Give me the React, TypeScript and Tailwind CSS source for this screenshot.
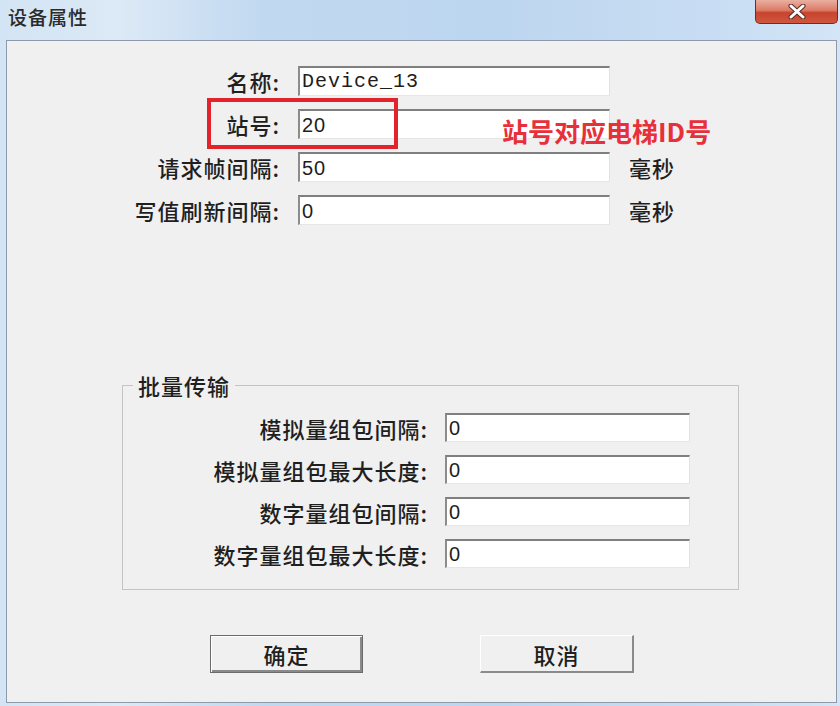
import React from "react";

const cjk = { fontFamily: '"Noto Sans CJK SC", "Noto Sans", sans-serif' };

function Field({ value, width, mono }: { value: string; width: string; mono?: boolean }) {
  return (
    <div
      className={`${width} h-full bg-white border-t-2 border-l-2 border-t-[#7f7f7f] border-l-[#8c8c8c] border-r border-b border-r-[#e2e2e2] border-b-[#e6e6e6] flex items-center pl-[2px] text-[#1d1d1d]`}
      style={{
        fontFamily: mono ? '"Liberation Mono", monospace' : '"Liberation Sans", sans-serif',
      }}
    >
      <span className="text-[20px] leading-none">{value}</span>
    </div>
  );
}

const topRows = [
  { label: "名称:", value: "Device_13", mono: true, unit: "" },
  { label: "站号:", value: "20", mono: false, unit: "" },
  { label: "请求帧间隔:", value: "50", mono: false, unit: "毫秒" },
  { label: "写值刷新间隔:", value: "0", mono: false, unit: "毫秒" },
];

const batchRows = ["模拟量组包间隔:", "模拟量组包最大长度:", "数字量组包间隔:", "数字量组包最大长度:"];

export default function App() {
  return (
    <div
      className="w-[840px] h-[706px] flex flex-col overflow-hidden bg-[linear-gradient(90deg,#d3e4f4_0%,#dce9f6_14%,#c0d8f0_32%,#bdd6ef_60%,#c8ddf3_85%,#d3e5f6_100%)] text-[#1f1f1f]"
      style={cjk}
    >
      {/* title bar */}
      <div className="h-[40px] shrink-0 flex items-start justify-between">
        <span className="pl-[8px] pt-[5px] text-[19px] leading-[24px] font-medium text-[#2a2a2a] tracking-[1px]">
          设备属性
        </span>
        <div className="mr-[2px] w-[83px] h-[24px] rounded-b-[5px] border border-t-0 border-[#6e2c22] bg-[linear-gradient(180deg,#eab0a0_0%,#dc7a66_45%,#c8432e_55%,#d0573f_100%)] flex items-center justify-center">
          <svg width="18" height="15" viewBox="0 0 18 15">
            <path d="M3 2 L15 13 M15 2 L3 13" stroke="#5a2a24" strokeWidth="5" strokeLinecap="round" />
            <path d="M3 2 L15 13 M15 2 L3 13" stroke="#ffffff" strokeWidth="3" strokeLinecap="round" />
          </svg>
        </div>
      </div>

      {/* client area */}
      <div className="flex-1 pl-[6px] pr-[3px] pb-[3px] flex">
        <div className="flex-1 relative border border-[#8d9aaa] bg-[#f0f0f0] flex flex-col pt-[25px] text-[22px] font-medium tracking-[1px]">
          <div className="flex flex-col gap-[13px]">
            {topRows.map((r) => (
              <div key={r.label} className="flex items-center h-[30px]">
                <div className="w-[273px] text-right leading-none">{r.label}</div>
                <div className="ml-[18px] h-full">
                  <Field value={r.value} width="w-[312px]" mono={r.mono} />
                </div>
                {r.unit && <div className="ml-[19px] leading-none">{r.unit}</div>}
              </div>
            ))}
          </div>

          {/* group box */}
          <div className="ml-[115px] mt-[160px] w-[617px] border border-[#c4c4c4] flex flex-col pb-[21px]">
            <div className="-mt-[13px] ml-[10px] px-[5px] w-fit bg-[#f0f0f0] leading-[24px]">批量传输</div>
            <div className="mt-[16px] flex flex-col gap-[13px]">
              {batchRows.map((l) => (
                <div key={l} className="flex items-center h-[29px]">
                  <div className="w-[305px] text-right leading-none">{l}</div>
                  <div className="ml-[17px] h-full">
                    <Field value="0" width="w-[245px]" />
                  </div>
                </div>
              ))}
            </div>
          </div>

          {/* buttons */}
          <div className="mt-[45px] ml-[203px] flex gap-[117px]">
            <button className="w-[153px] h-[38px] border border-[#6b6b6b] bg-[#f0f0f0] shadow-[inset_1px_1px_0_#ffffff,inset_-2px_-2px_0_#8a8a8a] text-[22px] font-medium leading-none tracking-[1px]">
              确定
            </button>
            <button className="w-[154px] h-[38px] bg-[#f0f0f0] border-t border-l border-t-[#ffffff] border-l-[#ffffff] border-r-2 border-b-2 border-r-[#8a8a8a] border-b-[#8a8a8a] text-[22px] font-medium leading-none tracking-[1px]">
              取消
            </button>
          </div>

          {/* annotation */}
          <div className="absolute left-[200px] top-[57px] w-[191px] h-[51px] border-4 border-[#e3232b]" />
          <div className="absolute left-[495px] top-[75px] text-[26px] leading-[30px] font-bold tracking-normal text-[#e8303a]">
            站号对应电梯ID号
          </div>
        </div>
      </div>
    </div>
  );
}
